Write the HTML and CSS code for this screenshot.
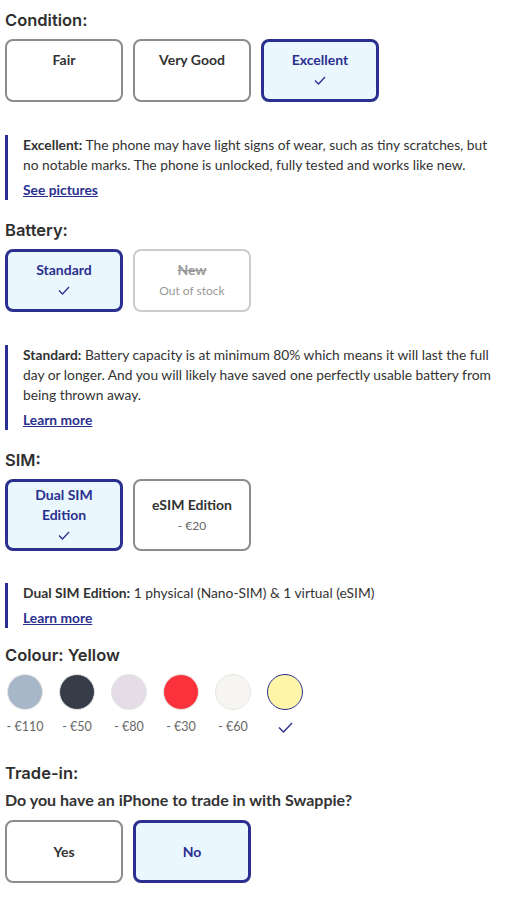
FILE: index.html
```html
<!DOCTYPE html>
<html lang="en">
<head>
    <meta charset="UTF-8">
    <meta name="viewport" content="width=device-width, initial-scale=1.0">
    <title>Choose your phone</title>
    <link rel="stylesheet" href="styles.css">
</head>
<body>
    <!-- Condition -->
    <section class="group">
        <div class="group-title">Condition:</div>
        <div class="options">
            <div class="option">
                <span class="option-label">Fair</span>
                <span class="option-check"></span>
            </div>
            <div class="option">
                <span class="option-label">Very Good</span>
                <span class="option-check"></span>
            </div>
            <div class="option selected">
                <span class="option-label">Excellent</span>
                <span class="option-check">
                    <svg width="12" height="9" viewBox="0 0 12 9"><path d="M1 4.5l3.5 3.5L11 1" fill="none" stroke="#2b2f8f" stroke-width="1.3"/></svg>
                </span>
            </div>
        </div>
        <div class="info">
            <p><b>Excellent:</b> The phone may have light signs of wear, such as tiny scratches, but no notable marks. The phone is unlocked, fully tested and works like new.</p>
            <a href="#" class="info-link">See pictures</a>
        </div>
    </section>

    <!-- Battery -->
    <section class="group">
        <div class="group-title">Battery:</div>
        <div class="options">
            <div class="option selected">
                <span class="option-label">Standard</span>
                <span class="option-check">
                    <svg width="12" height="9" viewBox="0 0 12 9"><path d="M1 4.5l3.5 3.5L11 1" fill="none" stroke="#2b2f8f" stroke-width="1.3"/></svg>
                </span>
            </div>
            <div class="option disabled">
                <span class="option-label"><s>New</s></span>
                <span class="option-sub">Out of stock</span>
            </div>
        </div>
        <div class="info">
            <p><b>Standard:</b> Battery capacity is at minimum 80% which means it will last the full day or longer. And you will likely have saved one perfectly usable battery from being thrown away.</p>
            <a href="#" class="info-link">Learn more</a>
        </div>
    </section>

    <!-- SIM -->
    <section class="group">
        <div class="group-title">SIM:</div>
        <div class="options">
            <div class="option selected tall">
                <span class="option-label">Dual SIM Edition</span>
                <span class="option-check">
                    <svg width="12" height="9" viewBox="0 0 12 9"><path d="M1 4.5l3.5 3.5L11 1" fill="none" stroke="#2b2f8f" stroke-width="1.3"/></svg>
                </span>
            </div>
            <div class="option tall">
                <span class="option-label">eSIM Edition</span>
                <span class="option-sub">- €20</span>
            </div>
        </div>
        <div class="info short">
            <p><b>Dual SIM Edition:</b> 1 physical (Nano-SIM) &amp; 1 virtual (eSIM)</p>
            <a href="#" class="info-link">Learn more</a>
        </div>
    </section>

    <!-- Colour -->
    <section class="group">
        <div class="group-title">Colour: Yellow</div>
        <div class="colours">
            <div class="colour">
                <span class="swatch" style="background:#a8b7c8"></span>
                <span class="colour-price">- €110</span>
            </div>
            <div class="colour">
                <span class="swatch" style="background:#363d48"></span>
                <span class="colour-price">- €50</span>
            </div>
            <div class="colour">
                <span class="swatch" style="background:#e4dde8"></span>
                <span class="colour-price">- €80</span>
            </div>
            <div class="colour">
                <span class="swatch" style="background:#fb323c"></span>
                <span class="colour-price">- €30</span>
            </div>
            <div class="colour">
                <span class="swatch" style="background:#f7f5f1"></span>
                <span class="colour-price">- €60</span>
            </div>
            <div class="colour current">
                <span class="swatch" style="background:#fdf6a8"></span>
                <span class="colour-price">
                    <svg width="15" height="11" viewBox="0 0 15 11"><path d="M1 5.5l4.5 4.5L14 1" fill="none" stroke="#2b2f8f" stroke-width="1.4"/></svg>
                </span>
            </div>
        </div>
    </section>

    <!-- Trade-in -->
    <section class="group">
        <div class="group-title">Trade-in:</div>
        <div class="question">Do you have an iPhone to trade in with Swappie?</div>
        <div class="options">
            <div class="option">
                <span class="option-label">Yes</span>
            </div>
            <div class="option selected">
                <span class="option-label">No</span>
            </div>
        </div>
    </section>
</body>
</html>
```

FILE: styles.css
```css
/* page */
body {
    margin: 0;
    padding: 8px 5px 0;
    font-family: Lato, "Liberation Sans", Arial, sans-serif;
    color: #333333;
    background: #ffffff;
}

/* section title */
.group-title {
    font-family: Inter, "Open Sans", sans-serif;
    font-weight: 600;
    font-size: 16.5px;
    line-height: 24px;
    margin-bottom: 7px;
    color: #2f2f2f;
}

/* option buttons */
.options {
    display: flex;
    gap: 10px;
}

.option {
    box-sizing: border-box;
    width: 118px;
    min-height: 63px;
    padding: 4px 10px;
    border: 2px solid #8c8c8c;
    border-radius: 8px;
    display: flex;
    flex-direction: column;
    justify-content: center;
    align-items: center;
    text-align: center;
    background: #ffffff;
}

.option.tall {
    min-height: 72px;
    padding-top: 2px;
    padding-bottom: 2px;
}

.option-label {
    font-weight: 700;
    font-size: 14px;
    line-height: 20px;
    color: #333333;
}

.option-check {
    height: 21px;
    display: flex;
    align-items: center;
    justify-content: center;
}

.option.tall .option-check {
    height: 20px;
}

.option-sub {
    font-size: 12px;
    line-height: 21px;
    color: #666666;
}

.option.selected {
    border: 3px solid #2b2f8f;
    background: #eaf7fe;
}

.option.selected .option-label {
    color: #2b2f8f;
}

.option.disabled {
    border-color: #cccccc;
}

.option.disabled .option-label,
.option.disabled .option-sub {
    color: #999999;
}

/* info box under the options */
.info {
    margin: 33px 0 18px;
    padding: 0 10px 0 15px;
    border-left: 3px solid #2b2f8f;
    font-size: 13.8px;
    line-height: 20px;
    color: #333333;
}

.info p {
    margin: 0;
}

.info b {
    color: #333333;
}

.info-link {
    display: inline-block;
    margin-top: 5px;
    font-weight: 700;
    color: #2b2f8f;
    text-decoration: underline;
}

.info.short {
    margin-top: 32px;
    margin-bottom: 15px;
}

/* colours */
.colours {
    display: flex;
    gap: 12px;
    margin-bottom: 24px;
}

.colour {
    width: 40px;
    display: flex;
    flex-direction: column;
    align-items: center;
}

.swatch {
    box-sizing: border-box;
    width: 36px;
    height: 36px;
    border-radius: 50%;
    border: 1px solid #e6e6e6;
}

.colour.current .swatch {
    border: 1px solid #2b2f8f;
}

.colour-price {
    margin-top: 7px;
    height: 20px;
    font-size: 12.5px;
    line-height: 20px;
    color: #666666;
    white-space: nowrap;
    display: flex;
    align-items: center;
}

/* trade-in */
.question {
    font-weight: 700;
    font-size: 16px;
    line-height: 20px;
    margin: -2px 0 10px;
    color: #333333;
}
```
